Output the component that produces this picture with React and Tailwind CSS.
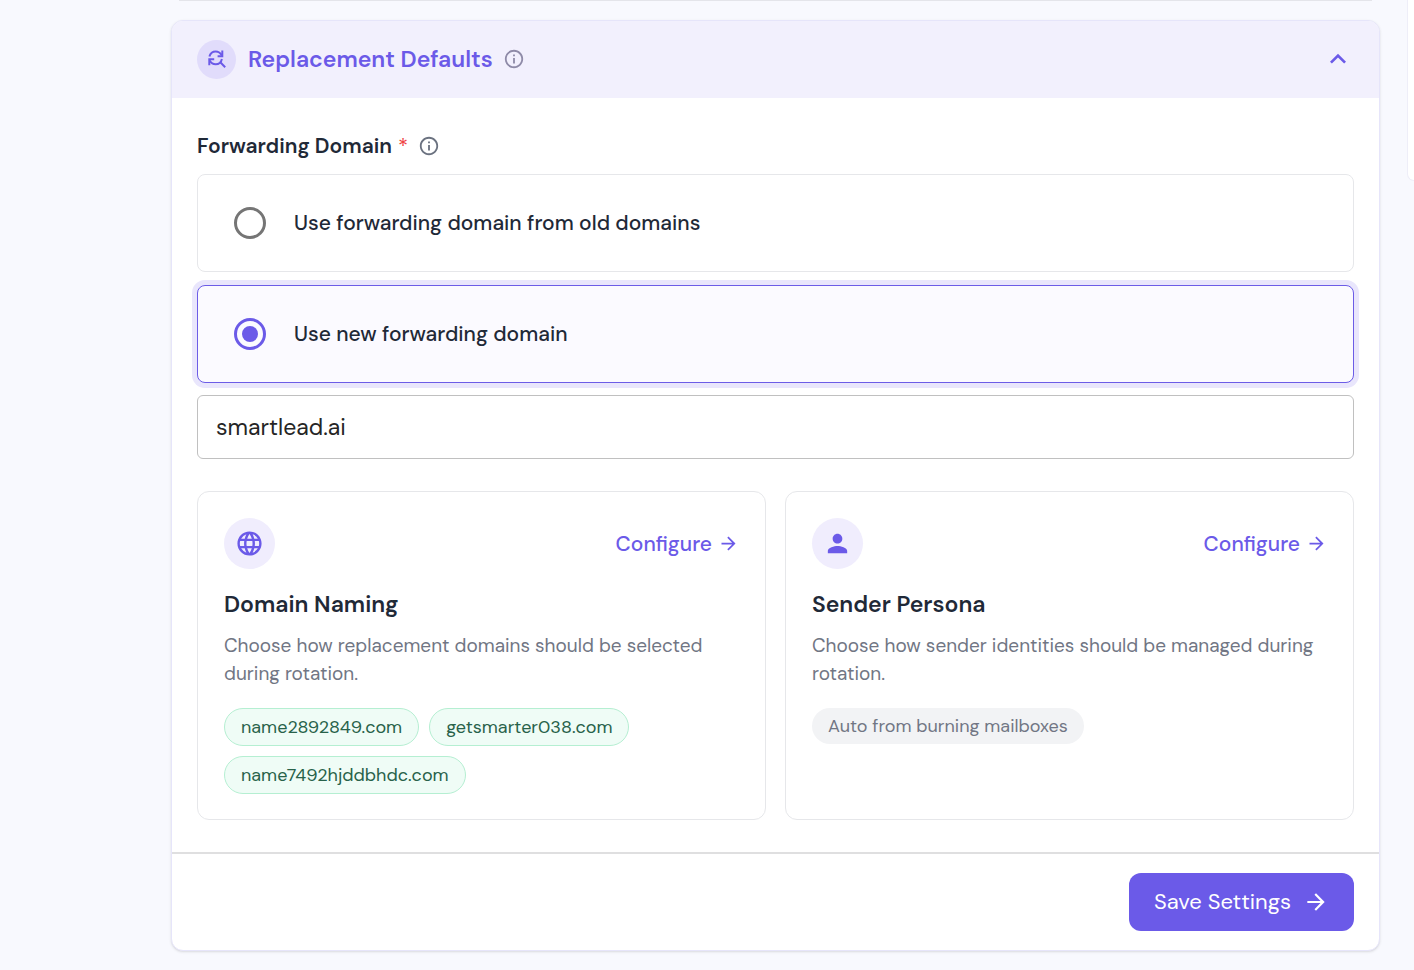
import { useState } from 'react';
import {
  MdArrowForward,
  MdExpandLess,
  MdInfoOutline,
  MdLanguage,
  MdPerson,
} from 'react-icons/md';

const forwardingOptions = [
  { id: 'old', label: 'Use forwarding domain from old domains' },
  { id: 'new', label: 'Use new forwarding domain' },
];

const domains = ['name2892849.com', 'getsmarter038.com', 'name7492hjddbhdc.com'];

function FindReplaceIcon() {
  return (
    <svg
      viewBox="0 0 18 18"
      className="w-[18px] h-[18px]"
      fill="none"
      stroke="currentColor"
      strokeWidth="2"
      aria-hidden="true"
    >
      <path d="M1.4 6.6C2.3 3.4 4.7 1.6 7.7 1.6c2.8 0 4.8 1.5 6.2 4" />
      <path d="M14.3 0.4v5.8H9.6" />
      <path d="M13.9 9c-.8 3.4-3.2 5.3-6.2 5.3-2.7 0-4.7-1.3-6-3.7" />
      <path d="M6.2 9.3H1.3v6" />
      <path d="M12.3 12.3l4.9 4.9" />
    </svg>
  );
}

function InfoButton({ label, className }) {
  return (
    <button type="button" aria-label={label} className={className}>
      <MdInfoOutline className="w-[22px] h-[22px]" />
    </button>
  );
}

function RadioCard({ option, checked, onChange }) {
  return (
    <label
      className={`flex items-center gap-7 h-[98px] px-9 rounded-lg border cursor-pointer ${
        checked
          ? 'border-[#6c5ce7] bg-[#fbfaff] ring-5 ring-[#e9e6fc]'
          : 'border-[#e6e7ea] bg-white'
      }`}
    >
      <input
        type="radio"
        name="forwarding"
        value={option.id}
        checked={checked}
        onChange={() => onChange(option.id)}
        className="appearance-none shrink-0 w-8 h-8 rounded-full border-3 border-[#757575] bg-clip-content p-[5px] checked:border-[#6b5ae8] checked:bg-[#6b5ae8]"
      />
      <span className="text-[21px] leading-7 font-medium text-[#1f2937]">{option.label}</span>
    </label>
  );
}

function ConfigCard({ icon: Icon, title, description, children }) {
  return (
    <section className="px-[26px] pt-[26px] pb-[25px] rounded-xl border border-[#e6e7ea] bg-white">
      <div className="flex items-center justify-between">
        <div className="flex items-center justify-center w-[51px] h-[51px] rounded-full bg-[#f0edfd]">
          <Icon className="w-[29px] h-[29px] text-[#6b5ae8]" />
        </div>
        <button type="button" className="flex items-center gap-1.5 text-[21px] leading-7 font-medium text-[#6b5ae8]">
          Configure
          <MdArrowForward className="w-[21px] h-[21px]" />
        </button>
      </div>
      <h3 className="mt-[19px] text-[23px] leading-8 font-semibold text-[#1f2937]">{title}</h3>
      <p className="mt-3 text-[19px] leading-7 text-[#717684]">{description}</p>
      <div className="flex flex-wrap gap-2.5 mt-5">{children}</div>
    </section>
  );
}

export default function App() {
  const [forwarding, setForwarding] = useState('new');
  const [domain, setDomain] = useState('smartlead.ai');

  return (
    <div className="flex items-start gap-[27px] min-h-screen pl-[171px] bg-[#f8f9fe] font-['DM_Sans','Inter',sans-serif]">
      <main className="flex-1 min-w-0 pb-[19px]">
        {/* Bottom edge of the previous section */}
        <div className="mx-2 h-px bg-[#e4e5ea]" />

        <form
          onSubmit={(e) => e.preventDefault()}
          className="mt-[19px] rounded-xl border border-[#e6e5fa] bg-white shadow-sm overflow-hidden"
        >
          {/* Header */}
          <header className="flex items-center h-[77px] px-[25px] pb-px bg-[#f2f0fd]">
            <div className="flex items-center justify-center w-[39px] h-[39px] rounded-full bg-[#e1dcfb] text-[#6b5ae8]">
              <FindReplaceIcon />
            </div>
            <h2 className="ml-3 text-[23px] leading-8 font-semibold text-[#6b5ae8]">Replacement Defaults</h2>
            <InfoButton label="About replacement defaults" className="ml-2.5 text-[#8f8ba8]" />
            <button type="button" aria-label="Collapse" className="ml-auto text-[#6b5ae8]">
              <MdExpandLess className="w-8 h-8" />
            </button>
          </header>

          {/* Forwarding domain */}
          <div className="px-[25px] pt-8 pb-8">
            <div className="flex items-center h-8 mb-3">
              <span id="forwarding-label" className="text-[21px] leading-8 font-semibold text-[#1f2937]">
                Forwarding Domain
              </span>
              <span className="ml-1.5 text-[21px] leading-8 text-[#ef4444]">*</span>
              <InfoButton label="About forwarding domain" className="ml-2.5 text-[#6b7280]" />
            </div>
            <div role="radiogroup" aria-labelledby="forwarding-label" className="flex flex-col gap-[13px]">
              {forwardingOptions.map((option) => (
                <RadioCard
                  key={option.id}
                  option={option}
                  checked={forwarding === option.id}
                  onChange={setForwarding}
                />
              ))}
            </div>
            <input
              type="text"
              aria-label="New forwarding domain"
              value={domain}
              onChange={(e) => setDomain(e.target.value)}
              className="block w-full h-16 mt-3 px-[18px] rounded-md border border-[#c0c0c0] bg-white text-[23px] leading-8 text-[#252525]"
            />

            {/* Naming and persona */}
            <div className="grid grid-cols-2 gap-[19px] mt-8">
              <ConfigCard
                icon={MdLanguage}
                title="Domain Naming"
                description="Choose how replacement domains should be selected during rotation."
              >
                {domains.map((name) => (
                  <span
                    key={name}
                    className="px-4 py-1 rounded-full border border-[#b5efd2] bg-[#effcf6] text-[18px] leading-7 text-[#28624a]"
                  >
                    {name}
                  </span>
                ))}
              </ConfigCard>
              <ConfigCard
                icon={MdPerson}
                title="Sender Persona"
                description="Choose how sender identities should be managed during rotation."
              >
                <span className="self-start px-4 py-1 rounded-full bg-[#f2f3f5] text-[18px] leading-7 text-[#717684]">
                  Auto from burning mailboxes
                </span>
              </ConfigCard>
            </div>
          </div>

          {/* Footer */}
          <footer className="flex justify-end px-[25px] py-[19px] border-t-2 border-[#dfdfe0]">
            <button
              type="submit"
              className="flex items-center gap-3 h-[58px] px-[25px] rounded-xl bg-[#6b5ae8] text-[22px] leading-8 text-white"
            >
              Save Settings
              <MdArrowForward className="w-[26px] h-[26px]" />
            </button>
          </footer>
        </form>
      </main>

      <aside className="shrink-0 w-[7px] h-[181px] rounded-bl-xl border-l border-b border-[#eeeef8] bg-white" />
    </div>
  );
}
